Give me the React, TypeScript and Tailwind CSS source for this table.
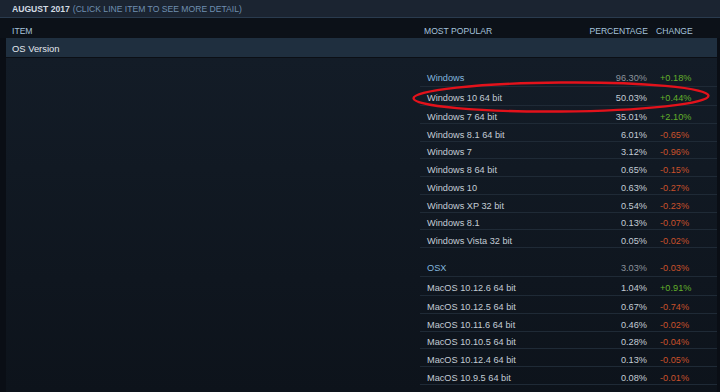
type Row = { name: string; pct: string; change: string };
type Group = { name: string; pct: string; change: string; rows: Row[] };

const groups: Group[] = [
  {
    name: 'Windows',
    pct: '96.30%',
    change: '+0.18%',
    rows: [
      { name: 'Windows 10 64 bit', pct: '50.03%', change: '+0.44%' },
      { name: 'Windows 7 64 bit', pct: '35.01%', change: '+2.10%' },
      { name: 'Windows 8.1 64 bit', pct: '6.01%', change: '-0.65%' },
      { name: 'Windows 7', pct: '3.12%', change: '-0.96%' },
      { name: 'Windows 8 64 bit', pct: '0.65%', change: '-0.15%' },
      { name: 'Windows 10', pct: '0.63%', change: '-0.27%' },
      { name: 'Windows XP 32 bit', pct: '0.54%', change: '-0.23%' },
      { name: 'Windows 8.1', pct: '0.13%', change: '-0.07%' },
      { name: 'Windows Vista 32 bit', pct: '0.05%', change: '-0.02%' },
    ],
  },
  {
    name: 'OSX',
    pct: '3.03%',
    change: '-0.03%',
    rows: [
      { name: 'MacOS 10.12.6 64 bit', pct: '1.04%', change: '+0.91%' },
      { name: 'MacOS 10.12.5 64 bit', pct: '0.67%', change: '-0.74%' },
      { name: 'MacOS 10.11.6 64 bit', pct: '0.46%', change: '-0.02%' },
      { name: 'MacOS 10.10.5 64 bit', pct: '0.28%', change: '-0.04%' },
      { name: 'MacOS 10.12.4 64 bit', pct: '0.13%', change: '-0.05%' },
      { name: 'MacOS 10.9.5 64 bit', pct: '0.08%', change: '-0.01%' },
      { name: 'MacOS 10.12.3 64 bit', pct: '0.06%', change: '-0.03%' },
    ],
  },
];

function Change({ value }: { value: string }) {
  const up = value.startsWith('+');
  return (
    <span className={up ? 'text-[#63b02a]' : 'text-[#c9512b]'}>{value}</span>
  );
}

export default function App() {
  return (
    <div className="relative w-[720px] h-[392px] overflow-hidden bg-[#0a0e15] font-['Liberation_Sans',Arial,sans-serif]">
      {/* title strip */}
      <div className="h-[18px] bg-[#1b2431] border-b border-[#2a3b4e] flex items-center pl-3 pt-[2px] text-[8.6px] leading-none">
        <span className="font-bold text-[#d2dae2]">AUGUST 2017</span>
        <span className="ml-[3px] text-[#6f8fb0]">(CLICK LINE ITEM TO SEE MORE DETAIL)</span>
      </div>

      {/* column headings */}
      <div className="h-[20px] bg-[#0c1118] flex items-center pt-[6px] text-[8.6px] leading-none text-[#a5c3dc]">
        <div className="w-[424px] pl-3">ITEM</div>
        <div className="flex-1">MOST POPULAR</div>
        <div className="w-[66px] text-right">PERCENTAGE</div>
        <div className="w-[72px] pl-[8px]">CHANGE</div>
      </div>

      {/* category row */}
      <div className="ml-[6px] w-[711px] h-[20px] bg-[#1f2f3f] border-b border-[#0b0f15] flex items-center pl-[6px] pt-[3px] text-[9.4px] leading-none text-[#e2e8ee]">
        OS Version
      </div>

      {/* body */}
      <div className="ml-[6px] w-[711px] h-[334px] bg-gradient-to-b from-[#131c27] to-[#0d131b] flex">
        <div className="w-[414px]" />
        <div className="w-[297px] text-[9.2px] leading-none">
          {groups.map((g) => (
            <div key={g.name} className="pt-[9.5px]">
              <div className="h-[19px] flex items-center pt-[4px] border-b border-[#1f2a36]">
                <div className="flex-1 pl-[7px] text-[#83b6de]">{g.name}</div>
                <div className="w-[70px] text-right text-[#8b939c]">{g.pct}</div>
                <div className="w-[70px] pl-[13px]">
                  <Change value={g.change} />
                </div>
              </div>
              {g.rows.map((r, i) => (
                <div
                  key={r.name}
                  className={`${i === 0 ? 'h-[19.6px] pt-[6px]' : 'h-[17.75px] pt-[6px]'} flex items-center border-b border-[#1f2a36] text-[#c3ccd5]`}
                >
                  <div className="flex-1 pl-[7px]">{r.name}</div>
                  <div className="w-[70px] text-right">{r.pct}</div>
                  <div className="w-[70px] pl-[13px]">
                    <Change value={r.change} />
                  </div>
                </div>
              ))}
            </div>
          ))}
        </div>
      </div>

      {/* red annotation ring */}
      <svg
        className="absolute left-[410px] top-[79px] pointer-events-none"
        width="302"
        height="36"
        viewBox="0 0 302 36"
      >
        <ellipse cx="151" cy="18" rx="147.5" ry="14.5" fill="none" stroke="#e3121b" strokeWidth="2.4" transform="rotate(-0.5 151 18)" />
      </svg>
    </div>
  );
}
